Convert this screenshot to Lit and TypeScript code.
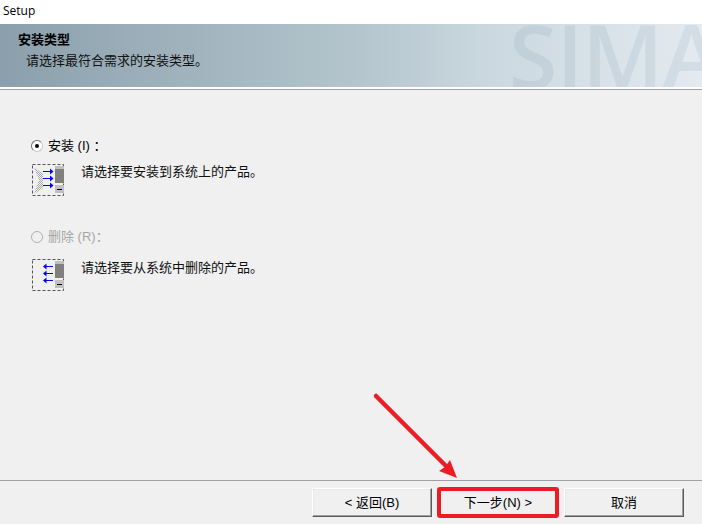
import { LitElement, html, css, svg } from "lit";
import { customElement } from "lit/decorators.js";

function optionIcon(install: boolean) {
  const arrows = [7.5, 14.5, 21.5].map((y) =>
    install
      ? svg`<path d="M11 ${y}H18" stroke="#0000ff" stroke-width="1" fill="none"/><path d="M18 ${y - 3}L21.5 ${y}L18 ${y + 3}Z" fill="#0000ff"/>`
      : svg`<path d="M14 ${y}H21" stroke="#0000ff" stroke-width="1" fill="none"/><path d="M14.5 ${y - 3}L11 ${y}L14.5 ${y + 3}Z" fill="#0000ff"/>`
  );
  return html`<svg class="opt-icon" width="32" height="32" viewBox="0 0 32 32">
    <defs>
      <pattern id="dots" width="2" height="2" patternUnits="userSpaceOnUse">
        <rect width="1" height="1" fill="#a8a8a8"/><rect x="1" y="1" width="1" height="1" fill="#a8a8a8"/>
      </pattern>
    </defs>
    <rect x="0.5" y="0.5" width="31" height="31" fill="none" stroke="#555" stroke-dasharray="3 2"/>
    ${install ? svg`<path d="M2 3L11 10V24L2 30L7 16Z" fill="url(#dots)"/>` : ""}
    ${arrows}
    <rect x="23" y="2" width="9" height="3" fill="#c0c0c0"/>
    <rect x="23" y="5" width="9" height="14" fill="#808080"/>
    <rect x="23" y="21" width="9" height="8" fill="#c0c0c0"/>
    <rect x="25" y="25" width="5" height="1" fill="#000"/>
  </svg>`;
}

@customElement("app-root")
export class AppRoot extends LitElement {
  static styles = css`
    :host {
      display: block;
      width: 702px;
      height: 524px;
      position: relative;
      overflow: hidden;
      background: #f0f0f0;
      font-family: "Liberation Sans", "Noto Sans CJK SC", sans-serif;
      font-size: 13px;
      color: #000;
    }
    .layout {
      display: flex;
      flex-direction: column;
      height: 100%;
    }
    .titlebar {
      height: 24px;
      background: #fff;
      padding: 0 3px 3px;
      display: flex;
      align-items: center;
      font-family: "Open Sans", sans-serif;
      font-size: 12px;
      box-sizing: border-box;
    }
    .banner {
      position: relative;
      height: 63px;
      overflow: hidden;
      background: linear-gradient(90deg, #8ba0ac 0%, #b3c4cc 50%, #cbd8e0 70%, #e3eaf0 100%);
      padding: 7px 18px 0;
      box-sizing: border-box;
    }
    .watermark {
      position: absolute;
      left: 509px;
      top: -13px;
      font-family: "Open Sans", sans-serif;
      font-size: 88px;
      line-height: 88px;
      color: #5f8098;
      opacity: 0.11;
      white-space: nowrap;
      font-weight: 600;
      letter-spacing: -1px;
    }
    .banner-title {
      position: relative;
      font-weight: bold;
      line-height: 18px;
    }
    .banner-sub {
      position: relative;
      margin-top: 3px;
      padding-left: 8px;
      line-height: 18px;
      color: #111;
    }
    .rule-light {
      height: 2px;
      background: #fff;
    }
    .rule-top {
      height: 1px;
      background: #a0a0a0;
    }
    .main {
      height: 390px;
      box-sizing: border-box;
      padding: 48px 0 0 31px;
      display: flex;
      flex-direction: column;
    }
    .option {
      height: 91px;
    }
    .radio-row {
      display: flex;
      align-items: center;
      gap: 5px;
      height: 16px;
    }
    .radio {
      width: 12px;
      height: 12px;
      box-sizing: border-box;
      border-radius: 50%;
      border: 1px solid;
      border-color: #707070 #c8c8c8 #c8c8c8 #707070;
      background: #fff;
      display: flex;
      align-items: center;
      justify-content: center;
    }
    .radio.off {
      border: 1.5px solid #b0b0b0;
      background: #f0f0f0;
    }
    .dot {
      width: 4px;
      height: 4px;
      border-radius: 50%;
      background: #000;
    }
    .radio-label {
      line-height: 16px;
    }
    .off-label {
      color: #a6a6a6;
    }
    .desc-row {
      display: flex;
      align-items: flex-start;
      gap: 17px;
      margin: 10px 0 0 1px;
      line-height: 16px;
      color: #111;
    }
    .desc-row.second {
      margin-top: 14px;
    }
    .desc-row.second .desc-text {
      padding-top: 1px;
    }
    .opt-icon {
      display: block;
      flex: none;
    }
    .rule-bottom {
      height: 1px;
      background: #a0a0a0;
    }
    .footer {
      flex: 1;
      display: flex;
      justify-content: flex-end;
      gap: 6px;
      padding: 7px 18px 0 0;
    }
    .btn {
      width: 120px;
      height: 29px;
      box-sizing: border-box;
      font: inherit;
      color: #000;
      padding: 0 0 2px;
      background: #f0f0f0;
      border: 1px solid;
      border-color: #fff #5a5a5a #5a5a5a #fff;
      box-shadow: inset -1px -1px 0 #a0a0a0, inset 1px 1px 0 #e8e8e8;
    }
    .btn.primary {
      outline: 4px solid #ed1c24;
      outline-offset: -3px;
      border-radius: 2px;
    }
    .arrow {
      position: absolute;
      left: 360px;
      top: 380px;
      pointer-events: none;
    }
  `;

  render() {
    return html`<div class="layout">
        <div class="titlebar">Setup</div>
        <div class="banner">
          <div class="watermark">SIMA</div>
          <div class="banner-title">安装类型</div>
          <div class="banner-sub">请选择最符合需求的安装类型。</div>
        </div>
        <div class="rule-light"></div>
        <div class="rule-top"></div>
        <div class="main">
          <div class="option">
            <div class="radio-row">
              <span class="radio"><span class="dot"></span></span>
              <span class="radio-label">安装 (I)&nbsp;：</span>
            </div>
            <div class="desc-row">
              ${optionIcon(true)}
              <span class="desc-text">请选择要安装到系统上的产品。</span>
            </div>
          </div>
          <div class="option">
            <div class="radio-row">
              <span class="radio off"></span>
              <span class="radio-label off-label">删除 (R)：</span>
            </div>
            <div class="desc-row second">
              ${optionIcon(false)}
              <span class="desc-text">请选择要从系统中删除的产品。</span>
            </div>
          </div>
        </div>
        <div class="rule-bottom"></div>
        <div class="footer">
          <button class="btn">&lt; 返回(B)</button>
          <button class="btn primary">下一步(N) &gt;</button>
          <button class="btn">取消</button>
        </div>
      </div>
      <svg class="arrow" width="120" height="110" viewBox="0 0 120 110">
        <path d="M16 16 L88 88" stroke="#ed1c24" stroke-width="4.5" stroke-linecap="round" fill="none"/>
        <path d="M97 98 L79 91 L85 87 L90 80 Z" fill="#ed1c24"/>
      </svg>`;
  }
}
